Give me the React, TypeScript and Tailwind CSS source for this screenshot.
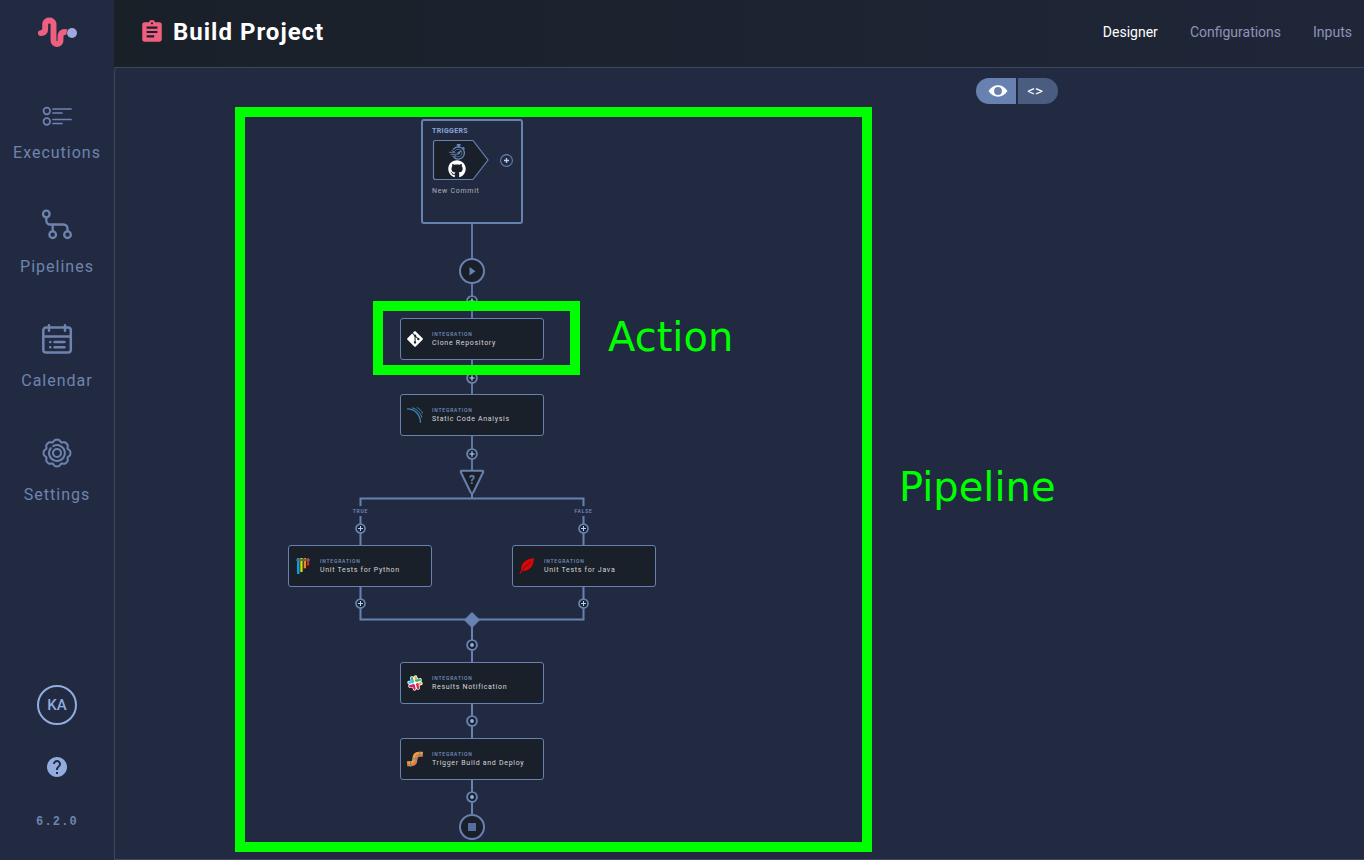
import type { ReactNode } from "react";
import { MdAssignment, MdHelp } from "react-icons/md";
import { FaGitAlt, FaGithub } from "react-icons/fa";

function Logo() {
  return (
    <svg viewBox="36 15 42 34" className="h-[34px] w-[42px]" fill="none" aria-hidden="true">
      <path
        d="M40.9 33.100C44 33.100 45.200 31.500 45.200 28.500V23.500a4.200 3.600 0 0 1 8.300 0V40.500a3.500 3.500 0 0 0 7 0V37c0-3.400 1.400-4.800 4-4.900"
        stroke="#ef6080"
        strokeWidth="5.900"
        strokeLinecap="round"
      />
      <path d="M60.500 30.500Q62.500 29 67.500 29.200L66 34l-4 2z" fill="#ef6080" />
      <circle cx="72" cy="33" r="5.500" fill="#222a42" />
      <circle cx="72" cy="33" r="5" fill="#a0a9dd" />
    </svg>
  );
}

function ExecutionsIcon() {
  return (
    <svg viewBox="0 0 32 32" className="size-8" fill="none" stroke="currentColor" strokeWidth="1.700" strokeLinecap="round" aria-hidden="true">
      <circle cx="5.800" cy="16" r="3.300" />
      <circle cx="5.800" cy="26.500" r="3.300" />
      <path d="M12 14h18M12 18h9M12 24.500h18M12 28.500h9" />
    </svg>
  );
}

function PipelinesIcon() {
  return (
    <svg viewBox="0 0 32 32" className="size-8" fill="none" stroke="currentColor" strokeWidth="2.300" aria-hidden="true">
      <circle cx="5.300" cy="5" r="3.300" />
      <circle cx="11.700" cy="25.700" r="3.300" />
      <circle cx="26.500" cy="25.700" r="3.300" />
      <path d="M5.300 8.300v3.200a4 4 0 0 0 4 4h13.200a4 4 0 0 1 4 4v3M11.700 15.500v7" />
    </svg>
  );
}

function CalendarIcon() {
  return (
    <svg viewBox="0 0 32 32" className="size-8" fill="none" stroke="currentColor" strokeWidth="2.500" strokeLinecap="round" aria-hidden="true">
      <rect x="2.300" y="4.500" width="27.500" height="25" rx="2.800" />
      <path d="M2.300 13.500h27.500" />
      <path d="M8 2.300v5.400M24 2.300v5.400M9.200 18.900h.1M13.500 18.900h10M9.200 24.300h.1M13.500 24.300h10" />
    </svg>
  );
}

const gearOutline =
  Array.from({ length: 96 }, (_, i) => {
    const a = (i / 96) * Math.PI * 2;
    const r = 12.7 + 0.95 * Math.cos(8 * a) + 0.25 * Math.cos(16 * a + Math.PI);
    return `${i ? "L" : "M"}${(16 + r * Math.cos(a)).toFixed(2)} ${(16 + r * Math.sin(a)).toFixed(2)}`;
  }).join("") + "Z";

function SettingsIcon() {
  return (
    <svg viewBox="0 0 32 32" className="size-8" fill="none" stroke="currentColor" strokeWidth="2" strokeLinecap="round" aria-hidden="true">
      <path d={gearOutline} strokeLinejoin="round" />
      <circle cx="16" cy="16" r="4" />
      <path d="M12.200 9.100A7.900 7.900 0 1 1 9.800 11.100" />
    </svg>
  );
}

function EyeIcon() {
  return (
    <svg viewBox="0 0 20 12" className="h-3 w-5" aria-hidden="true">
      <path
        fill="currentColor"
        fillRule="evenodd"
        d="M.5 6C3 2.300 6.300.3 10 .3S17 2.300 19.500 6C17 9.700 13.700 11.700 10 11.700S3 9.700.5 6zM10 2.100a3.900 3.900 0 1 0 0 7.800 3.900 3.900 0 0 0 0-7.800z"
      />
    </svg>
  );
}

function SonarIcon() {
  return (
    <svg viewBox="0 0 16 16" className="size-4" fill="none" stroke="#3d86b4" strokeLinecap="round" aria-hidden="true">
      <path d="M.5 1.900C8 2 13.300 7.600 13.500 15.300" strokeWidth="1.300" />
      <path d="M5.500.8c4.800 1.400 8.200 4.900 9.400 9.400" strokeWidth="1" />
      <path d="M10.200.6c2.500 1.200 4.300 3.100 5.400 5.600" strokeWidth="1" />
    </svg>
  );
}

function PytestIcon() {
  return (
    <svg viewBox="0 0 16 16" className="size-4" aria-hidden="true">
      <path d="M2 0h2.500v16H2z" fill="#0a9edc" />
      <path d="M5.300 0h2.300v14H5.300z" fill="#d5e000" />
      <path d="M8.700 0h2.300v10.300H8.700z" fill="#f08a1d" />
      <path d="M11.900 0h2.200v7.500h-2.200z" fill="#df2815" />
      <path d="M1.200 1h13.600v2H1.200z" fill="#65655f" />
    </svg>
  );
}

function FeatherIcon() {
  return (
    <svg viewBox="0 0 16 16" className="size-4" aria-hidden="true">
      <path d="M15.300.2C9.500.3 3.800 3.200 2.400 8.700c-.3 1.200-.3 2.300-.1 3.300L.2 15.800l.9.1 2.100-3c5 .6 9.600-2.700 10.800-7.700.5-1.800.7-3.400 1.300-5z" fill="#dd0505" />
      <path d="M3 12.600C6 8.500 8.500 6.200 12 4" stroke="#1a2029" strokeWidth=".7" fill="none" />
    </svg>
  );
}

function SlackIcon() {
  return (
    <svg viewBox="0 0 16 16" className="size-4" fill="none" strokeLinecap="round" aria-hidden="true">
      <g transform="rotate(-14 8 8)">
        <path d="M6.200 2.500v11M9.800 2.500v11M2.500 6.200h11M2.500 9.800h11" stroke="#ffffff" strokeWidth="3.700" />
        <g strokeWidth="2.200">
          <path d="M6.200 2.500v4.300" stroke="#2bb67d" />
          <path d="M2.500 6.200h4" stroke="#36c5f0" />
          <path d="M9.800 2.500v4" stroke="#ecb22e" />
          <path d="M9.500 6.200h4" stroke="#2bb67d" />
          <path d="M2.500 9.800h4M6.200 9.500v4" stroke="#e01e5a" />
          <path d="M9.500 9.800h4" stroke="#ecb22e" />
          <path d="M9.800 9.500v4" stroke="#e01e5a" />
        </g>
        <path d="M8 8h.01" stroke="#fff" strokeWidth="3" />
      </g>
    </svg>
  );
}

function PipeIcon() {
  return (
    <svg viewBox="0 0 16 16" className="size-4" fill="none" aria-hidden="true">
      <path d="M.2 12.800h3.300q4.400 0 4.400-4.600 0-5 4.400-5h3.500" stroke="#e97a45" strokeWidth="5" />
      <path d="M.2 11.700h3.300q3.300 0 3.300-3.700 0-6 4.600-6h4.400" stroke="#e9a13a" strokeWidth="2.200" />
      <path d="M3.500 10v5.800M12.800.4v5.600M5 7.800h5.800" stroke="#3c9ca8" strokeWidth="1" />
    </svg>
  );
}

function StopwatchIcon() {
  return (
    <svg viewBox="0 0 17 16" className="h-4 w-[17px]" fill="none" stroke="#6a87bb" strokeLinecap="round" aria-hidden="true">
      <path d="M4.500 5.200A6.100 6.100 0 1 1 5 13.300" strokeWidth="1.300" />
      <path d="M6.300 6.500A3.800 3.800 0 1 1 6.300 11.500" strokeWidth=".7" />
      <path d="M9.700 1.600v1.600M8.500.9h2.400" strokeWidth="1.700" />
      <path d="M14.200 3.500l1 1M9.500 9.200l2.300-2.200" strokeWidth="1.200" />
      <path d="M.6 8.300h5M2 10.300h6M3.500 12.200h3M3 6.600l3 1.500" strokeWidth=".9" />
      <circle cx="9.500" cy="9.200" r="1.100" strokeWidth=".8" />
    </svg>
  );
}

const navItems: { label: string; icon: ReactNode }[] = [
  { label: "Executions", icon: <ExecutionsIcon /> },
  { label: "Pipelines", icon: <PipelinesIcon /> },
  { label: "Calendar", icon: <CalendarIcon /> },
  { label: "Settings", icon: <SettingsIcon /> },
];

const actions: { name: string; at: string; icon: ReactNode }[] = [
  { name: "Clone Repository", at: "left-[285px] top-[250px]", icon: <FaGitAlt className="size-[18px] shrink-0 text-white" /> },
  { name: "Static Code Analysis", at: "left-[285px] top-[326px]", icon: <SonarIcon /> },
  { name: "Unit Tests for Python", at: "left-[173px] top-[477px]", icon: <PytestIcon /> },
  { name: "Unit Tests for Java", at: "left-[397px] top-[477px]", icon: <FeatherIcon /> },
  { name: "Results Notification", at: "left-[285px] top-[594px]", icon: <SlackIcon /> },
  { name: "Trigger Build and Deploy", at: "left-[285px] top-[670px]", icon: <PipeIcon /> },
];

const insertPoints: { at: string; dot?: boolean }[] = [
  { at: "left-[351px] top-[227px] size-3" },
  { at: "left-[351px] top-[304px] size-3" },
  { at: "left-[351px] top-[380px] size-3" },
  { at: "left-[240px] top-[455px] size-[11px]" },
  { at: "left-[463px] top-[455px] size-[11px]" },
  { at: "left-[240px] top-[530px] size-[11px]" },
  { at: "left-[463px] top-[530px] size-[11px]" },
  { at: "left-[351px] top-[571px] size-3", dot: true },
  { at: "left-[351px] top-[647px] size-3", dot: true },
  { at: "left-[351px] top-[723px] size-3", dot: true },
];

function ActionCard({ name, at, icon }: { name: string; at: string; icon: ReactNode }) {
  return (
    <button
      type="button"
      className={`absolute ${at} flex h-[42px] w-36 items-center gap-[9px] rounded-[3px] border border-[#6781b0] bg-[#1a2029] pl-1.5 text-left`}
    >
      <span className="flex size-4 items-center justify-center">{icon}</span>
      <span className="flex flex-col pt-px">
        <span className="text-[5px] leading-[8px] font-medium tracking-[0.8px] text-[#7690c2]">INTEGRATION</span>
        <span className="text-[7px] leading-[11px] tracking-widest whitespace-nowrap text-[#d4d6da]">{name}</span>
      </span>
    </button>
  );
}

function InsertButton({ at, dot }: { at: string; dot?: boolean }) {
  return (
    <button type="button" aria-label="Add action" className={`absolute ${at}`}>
      <svg viewBox="0 0 12 12" className="size-full" aria-hidden="true">
        <circle cx="6" cy="6" r="4.900" fill="#1a2029" stroke="#6781b0" strokeWidth="1.900" />
        {dot ? (
          <circle cx="6" cy="6" r="1.900" fill="#8fb0dc" />
        ) : (
          <path d="M6 3.300v5.400M3.300 6h5.400" stroke="#b4d4f5" strokeWidth="1.200" />
        )}
      </svg>
    </button>
  );
}

function Canvas() {
  return (
    <main className="relative min-h-[792px] flex-1 overflow-hidden rounded-tl-sm border-b border-l border-[#3f485b]">
      <div className="absolute top-2.5 left-[861px] flex gap-0.5">
        <button type="button" aria-label="Visual view" className="flex h-[26px] w-10 items-center justify-center rounded-l-full bg-[#6781b0] pl-1 text-white">
          <EyeIcon />
        </button>
        <button type="button" aria-label="Code view" className="flex h-[26px] w-10 items-center justify-center rounded-r-full bg-[#4a5c80] pr-1.5 text-[15px] text-white">
          &lt;&gt;
        </button>
      </div>

      <svg viewBox="0 0 760 790" className="absolute top-0 left-0 h-[790px] w-[760px]" fill="none" stroke="#6781b0" strokeWidth="2" aria-hidden="true">
        <path d="M357 156v274" stroke="#5c75a4" />
        <path d="M245.500 477V430.500H468.500V477M245.500 519V551.500H468.500V519M357 552V746" />
        <path d="M346.700 402.800h20.600q1.400 0 .8 1.500L358.300 424.500q-1.300 2-2.600 0L345.900 404.300q-.6-1.500.8-1.500z" fill="#1a2029" />
        <path d="M357 426v4" />
        <path d="M357 544.500l7.500 7.500-7.500 7.500-7.500-7.500z" fill="#6781b0" strokeWidth="1" />
        <circle cx="357" cy="203" r="12" fill="#1a2029" />
        <path d="M354.500 199v8.500l6-4.250z" fill="#6781b0" stroke="none" />
        <circle cx="357" cy="759" r="12" fill="#1a2029" />
        <path d="M353 755h8v8h-8z" fill="#566d9d" stroke="none" />
      </svg>

      <span className="absolute top-[404px] left-[347px] w-5 text-center text-xs leading-4 font-bold text-[#6781b0]">?</span>
      <span className="absolute top-[438px] left-[230px] w-[31px] bg-[#222a42] text-center text-[5px] leading-[10px] font-medium tracking-[0.8px] text-[#7690c2]">TRUE</span>
      <span className="absolute top-[438px] left-[453px] w-[31px] bg-[#222a42] text-center text-[5px] leading-[10px] font-medium tracking-[0.8px] text-[#7690c2]">FALSE</span>

      <section className="absolute top-[51px] left-[306px] flex h-[105px] w-[102px] flex-col rounded-[3px] border-2 border-[#6781b0] pt-1 pl-[9px]">
        <h2 className="text-[7px] leading-3 font-bold tracking-wider text-[#8ba5d8]">TRIGGERS</h2>
        <div className="flex items-center gap-2.5">
          <button type="button" aria-label="New Commit" className="relative h-[46px] w-[58px]">
            <svg viewBox="0 0 58 46" className="h-[46px] w-[58px]" aria-hidden="true">
              <path d="M3.500 3.500h37.500l15 19.500-15 19.500h-37.500q-2 0-2-2v-35q0-2 2-2z" fill="#1a2029" stroke="#6781b0" strokeWidth="1.200" />
            </svg>
            <span className="absolute inset-y-0 left-4 flex flex-col items-center justify-center pt-px">
              <StopwatchIcon />
              <FaGithub className="size-[18px] text-white" />
            </span>
          </button>
          <button type="button" aria-label="Add trigger" className="size-[13px]">
            <svg viewBox="0 0 13 13" className="size-[13px]" aria-hidden="true">
              <circle cx="6.500" cy="6.500" r="5.900" fill="#222a42" stroke="#6781b0" strokeWidth="1.100" />
              <path d="M6.500 4v5M4 6.500h5" stroke="#b4d4f5" strokeWidth="1.300" />
            </svg>
          </button>
        </div>
        <p className="mt-0.5 text-[7px] leading-3 tracking-widest text-[#abb0bb]">New Commit</p>
      </section>

      {insertPoints.map((p) => (
        <InsertButton key={p.at} {...p} />
      ))}
      {actions.map((a) => (
        <ActionCard key={a.name} {...a} />
      ))}

      <div className="pointer-events-none absolute top-[39px] left-[120px] h-[745px] w-[637px] border-10 border-[#00ff00]" />
      <div className="pointer-events-none absolute top-[233px] left-[258px] h-[74px] w-[207px] border-10 border-[#00ff00]" />
      <span className="absolute top-[245px] left-[493px] font-['DejaVu_Sans',sans-serif] text-[40px] leading-[48px] text-[#00ff00]">Action</span>
      <span className="absolute top-[395px] left-[784px] font-['DejaVu_Sans',sans-serif] text-[40px] leading-[48px] text-[#00ff00]">Pipeline</span>
    </main>
  );
}

export default function App() {
  return (
    <div className="flex min-h-screen bg-[#222a42] font-['Roboto',sans-serif]">
      <aside className="flex w-[114px] shrink-0 flex-col items-center pt-[15px] pb-[25px]">
        <a href="#home" aria-label="Home">
          <Logo />
        </a>
        <nav className="mt-[46px] flex flex-col gap-11">
          {navItems.map((item) => (
            <a key={item.label} href={`#${item.label.toLowerCase()}`} className="flex flex-col items-center gap-3.5 text-[#6e84ae]">
              {item.icon}
              <span className="text-base leading-6 tracking-[1px]">{item.label}</span>
            </a>
          ))}
        </nav>
        <div className="mt-auto flex flex-col items-center gap-[30px] text-[#92acdf]">
          <button type="button" className="size-10 rounded-full border-2 border-[#92acdf] text-[15px] font-medium">
            KA
          </button>
          <button type="button" aria-label="Help">
            <MdHelp className="size-6" />
          </button>
          <span className="font-['Liberation_Mono',monospace] text-xs leading-[26px] font-bold tracking-widest text-[#6e84ae]">6.2.0</span>
        </div>
      </aside>
      <div className="flex min-w-0 flex-1 flex-col">
        <header className="flex h-[68px] shrink-0 items-center justify-between border-b border-[#3f485b] bg-linear-to-r from-[#1a2028] to-[#1f2638] pr-3 pb-[3px] pl-[25px]">
          <div className="flex items-center gap-2">
            <MdAssignment className="size-[26px] text-[#ef6080]" />
            <h1 className="text-2xl font-bold tracking-[1px] text-white">Build Project</h1>
          </div>
          <nav className="flex gap-8 text-sm text-[#9193b8]">
            <a href="#designer" aria-current="page" className="text-white">
              Designer
            </a>
            <a href="#configurations">Configurations</a>
            <a href="#inputs">Inputs</a>
          </nav>
        </header>
        <Canvas />
      </div>
    </div>
  );
}
